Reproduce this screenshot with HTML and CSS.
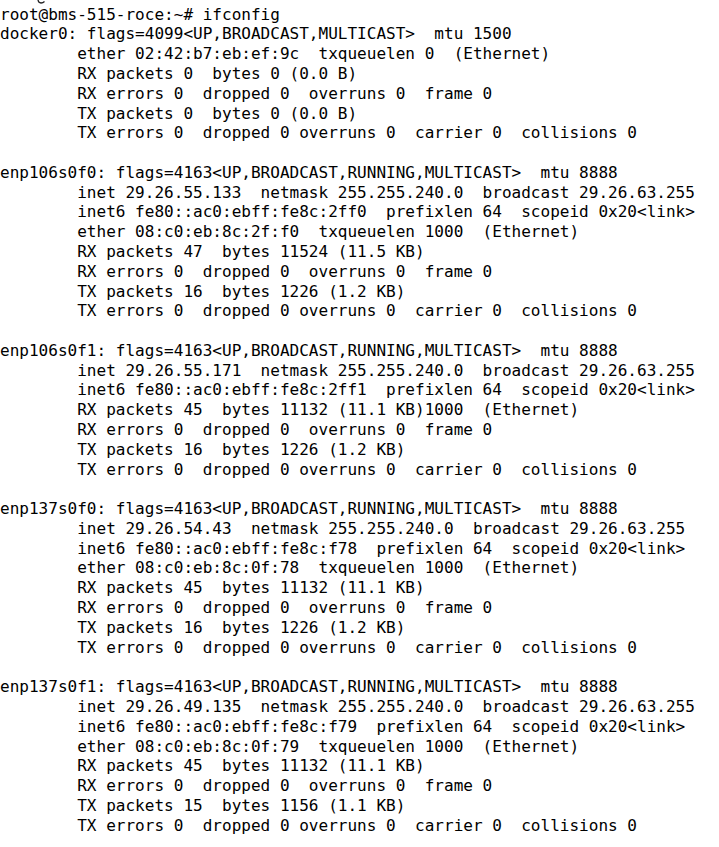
FILE: index.html
```html
<!DOCTYPE html>
<html lang="en">
<head>
<meta charset="utf-8">
<title>ifconfig</title>
<link rel="stylesheet" href="styles.css">
</head>
<body>
<div class="term">
<svg class="cut-glyph" width="10" height="5" viewBox="0 0 10 5" aria-hidden="true"><path d="M1 0 Q1.5 3 4 3 Q6 3 7.5 1.6" fill="none" stroke="#222" stroke-width="1.3"/></svg>
<pre class="out">root@bms-515-roce:~# ifconfig
docker0: flags=4099&lt;UP,BROADCAST,MULTICAST&gt;  mtu 1500
        ether 02:42:b7:eb:ef:9c  txqueuelen 0  (Ethernet)
        RX packets 0  bytes 0 (0.0 B)
        RX errors 0  dropped 0  overruns 0  frame 0
        TX packets 0  bytes 0 (0.0 B)
        TX errors 0  dropped 0 overruns 0  carrier 0  collisions 0

enp106s0f0: flags=4163&lt;UP,BROADCAST,RUNNING,MULTICAST&gt;  mtu 8888
        inet 29.26.55.133  netmask 255.255.240.0  broadcast 29.26.63.255
        inet6 fe80::ac0:ebff:fe8c:2ff0  prefixlen 64  scopeid 0x20&lt;link&gt;
        ether 08:c0:eb:8c:2f:f0  txqueuelen 1000  (Ethernet)
        RX packets 47  bytes 11524 (11.5 KB)
        RX errors 0  dropped 0  overruns 0  frame 0
        TX packets 16  bytes 1226 (1.2 KB)
        TX errors 0  dropped 0 overruns 0  carrier 0  collisions 0

enp106s0f1: flags=4163&lt;UP,BROADCAST,RUNNING,MULTICAST&gt;  mtu 8888
        inet 29.26.55.171  netmask 255.255.240.0  broadcast 29.26.63.255
        inet6 fe80::ac0:ebff:fe8c:2ff1  prefixlen 64  scopeid 0x20&lt;link&gt;
        RX packets 45  bytes 11132 (11.1 KB)1000  (Ethernet)
        RX errors 0  dropped 0  overruns 0  frame 0
        TX packets 16  bytes 1226 (1.2 KB)
        TX errors 0  dropped 0 overruns 0  carrier 0  collisions 0

enp137s0f0: flags=4163&lt;UP,BROADCAST,RUNNING,MULTICAST&gt;  mtu 8888
        inet 29.26.54.43  netmask 255.255.240.0  broadcast 29.26.63.255
        inet6 fe80::ac0:ebff:fe8c:f78  prefixlen 64  scopeid 0x20&lt;link&gt;
        ether 08:c0:eb:8c:0f:78  txqueuelen 1000  (Ethernet)
        RX packets 45  bytes 11132 (11.1 KB)
        RX errors 0  dropped 0  overruns 0  frame 0
        TX packets 16  bytes 1226 (1.2 KB)
        TX errors 0  dropped 0 overruns 0  carrier 0  collisions 0

enp137s0f1: flags=4163&lt;UP,BROADCAST,RUNNING,MULTICAST&gt;  mtu 8888
        inet 29.26.49.135  netmask 255.255.240.0  broadcast 29.26.63.255
        inet6 fe80::ac0:ebff:fe8c:f79  prefixlen 64  scopeid 0x20&lt;link&gt;
        ether 08:c0:eb:8c:0f:79  txqueuelen 1000  (Ethernet)
        RX packets 45  bytes 11132 (11.1 KB)
        RX errors 0  dropped 0  overruns 0  frame 0
        TX packets 15  bytes 1156 (1.1 KB)
        TX errors 0  dropped 0 overruns 0  carrier 0  collisions 0</pre>
</div>
</body>
</html>
```
FILE: styles.css
```css
html, body {
  margin: 0;
  padding: 0;
  background: #ffffff;
}

.term {
  position: relative;
  overflow: hidden;
  width: 719px;
  height: 847px;
  padding-top: 4.6px;
  box-sizing: border-box;
}

.cut-glyph {
  position: absolute;
  left: 37px;
  top: 0;
}

.out {
  margin: 0;
  font-family: "DejaVu Sans Mono", "Liberation Mono", monospace;
  font-size: 16.05px;
  line-height: 19.78px;
  color: #000000;
  white-space: pre;
}
```
